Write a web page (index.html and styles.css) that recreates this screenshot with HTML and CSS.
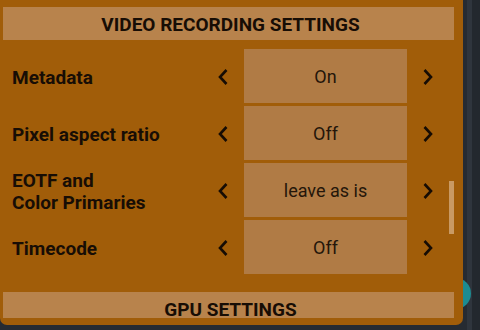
FILE: index.html
```html
<!DOCTYPE html>
<html>
<head>
<meta charset="utf-8">
<link rel="stylesheet" href="styles.css">
</head>
<body>
<div class="screen">
  <div class="fab"></div>
  <div class="panel">
    <div class="scroll">
      <div class="section-header">VIDEO RECORDING SETTINGS</div>
      <div class="rows">
        <div class="row">
          <div class="label">Metadata</div>
          <div class="arrow"><svg width="12" height="18" viewBox="0 0 12 18"><path d="M9.5 2 L3 9 L9.5 16" fill="none" stroke="#160c04" stroke-width="2.6"/></svg></div>
          <div class="value">On</div>
          <div class="arrow"><svg width="12" height="18" viewBox="0 0 12 18"><path d="M2.5 2 L9 9 L2.5 16" fill="none" stroke="#160c04" stroke-width="2.6"/></svg></div>
        </div>
        <div class="row">
          <div class="label">Pixel aspect ratio</div>
          <div class="arrow"><svg width="12" height="18" viewBox="0 0 12 18"><path d="M9.5 2 L3 9 L9.5 16" fill="none" stroke="#160c04" stroke-width="2.6"/></svg></div>
          <div class="value">Off</div>
          <div class="arrow"><svg width="12" height="18" viewBox="0 0 12 18"><path d="M2.5 2 L9 9 L2.5 16" fill="none" stroke="#160c04" stroke-width="2.6"/></svg></div>
        </div>
        <div class="row">
          <div class="label">EOTF and<br>Color Primaries</div>
          <div class="arrow"><svg width="12" height="18" viewBox="0 0 12 18"><path d="M9.5 2 L3 9 L9.5 16" fill="none" stroke="#160c04" stroke-width="2.6"/></svg></div>
          <div class="value">leave as is</div>
          <div class="arrow"><svg width="12" height="18" viewBox="0 0 12 18"><path d="M2.5 2 L9 9 L2.5 16" fill="none" stroke="#160c04" stroke-width="2.6"/></svg></div>
        </div>
        <div class="row">
          <div class="label">Timecode</div>
          <div class="arrow"><svg width="12" height="18" viewBox="0 0 12 18"><path d="M9.5 2 L3 9 L9.5 16" fill="none" stroke="#160c04" stroke-width="2.6"/></svg></div>
          <div class="value">Off</div>
          <div class="arrow"><svg width="12" height="18" viewBox="0 0 12 18"><path d="M2.5 2 L9 9 L2.5 16" fill="none" stroke="#160c04" stroke-width="2.6"/></svg></div>
        </div>
      </div>
      <div class="section-header gpu">GPU SETTINGS</div>
    </div>
    <div class="scrollbar"></div>
  </div>
</div>
</body>
</html>
```

FILE: styles.css
```css
html, body {
  margin: 0;
  padding: 0;
}
body {
  width: 480px;
  height: 330px;
  overflow: hidden;
  background: #262b32;
  font-family: Roboto, "Liberation Sans", sans-serif;
}
.screen {
  position: relative;
  width: 480px;
  height: 330px;
  background: linear-gradient(90deg, #262b32 0, #262b32 467px, #2f353d 467px, #2f353d 472px, #23282e 472px);
}
.fab {
  position: absolute;
  left: 440px;
  top: 278px;
  width: 31px;
  height: 31px;
  border-radius: 50%;
  background: #1d8c92;
}
.panel {
  position: relative;
  width: 463px;
  height: 325px;
  background: #a15d09;
  border-radius: 0 0 7px 7px;
}
.scroll {
  height: 318px;
  overflow: hidden;
  padding-top: 7px;
  box-sizing: border-box;
}
.section-header {
  margin-left: 3px;
  width: 451px;
  height: 33px;
  background: #b8834c;
  color: #170d05;
  font-weight: 700;
  font-size: 19px;
  display: flex;
  align-items: center;
  justify-content: center;
  padding-left: 4px;
  padding-top: 2px;
  box-sizing: border-box;
}
.section-header.gpu {
  margin-top: 18px;
}
.rows {
  margin-top: 9px;
  margin-left: 3px;
  width: 446px;
  display: flex;
  flex-direction: column;
  gap: 3px;
}
.row {
  display: grid;
  grid-template-columns: 199px 42px 163px 42px;
  height: 54px;
}
.label {
  padding-left: 9px;
  padding-top: 3px;
  display: flex;
  align-items: center;
  font-weight: 700;
  font-size: 19px;
  line-height: 22px;
  color: #170d05;
}
.arrow {
  display: flex;
  align-items: center;
  justify-content: center;
  padding-top: 1px;
}
.value {
  background: #b07b45;
  display: flex;
  align-items: center;
  justify-content: center;
  padding-top: 1px;
  font-size: 18px;
  color: #24160a;
}
.scrollbar {
  position: absolute;
  left: 449px;
  top: 181px;
  width: 5px;
  height: 53px;
  background: #c99a64;
}
```
